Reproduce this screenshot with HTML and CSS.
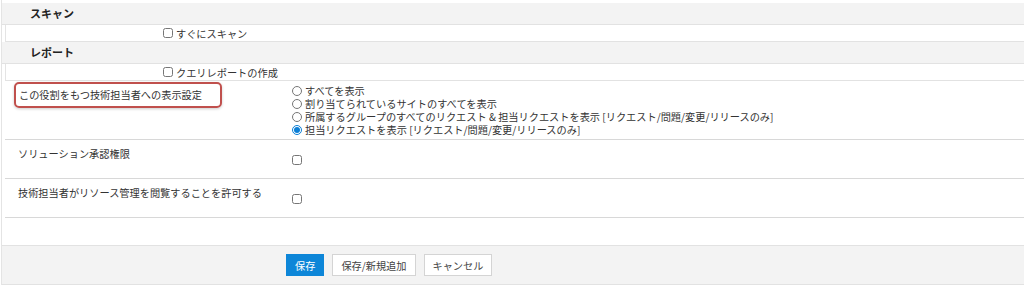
FILE: index.html
```html
<!DOCTYPE html>
<html lang="ja">
<head>
<meta charset="UTF-8">
<title>技術担当者の役割設定</title>
<link rel="stylesheet" href="styles.css">
</head>
<body>

<div class="panel">
    <div class="section-head">スキャン</div>
    <div class="check-row">
        <label><input type="checkbox"> すぐにスキャン</label>
    </div>
    <div class="section-head">レポート</div>
    <div class="check-row">
        <label><input type="checkbox"> クエリレポートの作成</label>
    </div>

    <div class="setting radio-setting">
        <div class="setting-label"><span class="highlight">この役割をもつ技術担当者への表示設定</span></div>
        <div class="setting-value options">
            <label><input type="radio" name="view"> すべてを表示</label>
            <label><input type="radio" name="view"> 割り当てられているサイトのすべてを表示</label>
            <label><input type="radio" name="view"> 所属するグループのすべてのリクエスト &amp; 担当リクエストを表示 [リクエスト/問題/変更/リリースのみ]</label>
            <label><input type="radio" name="view" checked> 担当リクエストを表示 [リクエスト/問題/変更/リリースのみ]</label>
        </div>
    </div>
    <div class="setting">
        <div class="setting-label">ソリューション承認権限</div>
        <div class="setting-value"><input type="checkbox"></div>
    </div>
    <div class="setting">
        <div class="setting-label">技術担当者がリソース管理を閲覧することを許可する</div>
        <div class="setting-value"><input type="checkbox"></div>
    </div>
    <div class="spacer"></div>

    <div class="footer">
        <button class="btn primary">保存</button>
        <button class="btn">保存/新規追加</button>
        <button class="btn">キャンセル</button>
    </div>
</div>

</body>
</html>
```

FILE: styles.css
```css
body {
    margin: 0;
    padding: 0;
    background-color: #fff;
    font-family: "Noto Sans CJK JP", "Noto Sans", sans-serif;
    font-size: 10.2px;
    color: #333;
}

.panel {
    margin-left: 1px;
    padding-top: 3px;
    border-left: 1px solid #e4e4e4;
}

.section-head {
    height: 21px;
    line-height: 21px;
    padding-left: 28px;
    background-color: #f3f3f3;
    border-bottom: 1px solid #e2e2e2;
    font-weight: bold;
    font-size: 11px;
    color: #222;
}

.check-row {
    height: 16px;
    margin-left: 3px;
    padding-left: 157px;
    border-left: 1px solid #e4e4e4;
    border-bottom: 1px solid #e2e2e2;
    display: flex;
    align-items: center;
}

.check-row label {
    display: flex;
    align-items: center;
}

input[type="checkbox"],
input[type="radio"] {
    width: 10px;
    height: 10px;
    margin: 0 3px 0 0;
    accent-color: #0b7fd6;
}

.setting {
    display: grid;
    grid-template-columns: 274px 1fr;
    margin-left: 3px;
    border-bottom: 1px solid #d8d8d8;
    height: 38px;
}

.setting-label {
    padding: 7px 0 0 13px;
    line-height: 14px;
    white-space: nowrap;
}

.setting-value {
    padding: 13px 0 0 13px;
}

.radio-setting {
    height: 58px;
}

.radio-setting .setting-label {
    padding: 1px 0 0 9px;
}

.highlight {
    display: inline-block;
    padding: 4px 18px 4px 3px;
    border: 2px solid #c0504d;
    border-radius: 5px;
    box-shadow: 0 1px 3px rgba(0, 0, 0, 0.2);
}

.options {
    padding: 3px 0 0 13px;
    display: flex;
    flex-direction: column;
}

.options label {
    display: flex;
    align-items: center;
    height: 13px;
    line-height: 13px;
    white-space: nowrap;
}

.spacer {
    height: 27px;
    border-bottom: 1px solid #e2e2e2;
}

.footer {
    height: 38px;
    background-color: #f3f3f3;
    border-bottom: 1px solid #e2e2e2;
    display: flex;
    align-items: center;
    padding-left: 284px;
    gap: 8px;
}

.btn {
    height: 22px;
    padding: 0 8px;
    font-family: inherit;
    font-size: 10.2px;
    color: #444;
    background-color: #fff;
    border: 1px solid #d4d4d4;
    cursor: pointer;
}

.btn.primary {
    background-color: #0d86d8;
    border-color: #0d86d8;
    color: #fff;
}
```
